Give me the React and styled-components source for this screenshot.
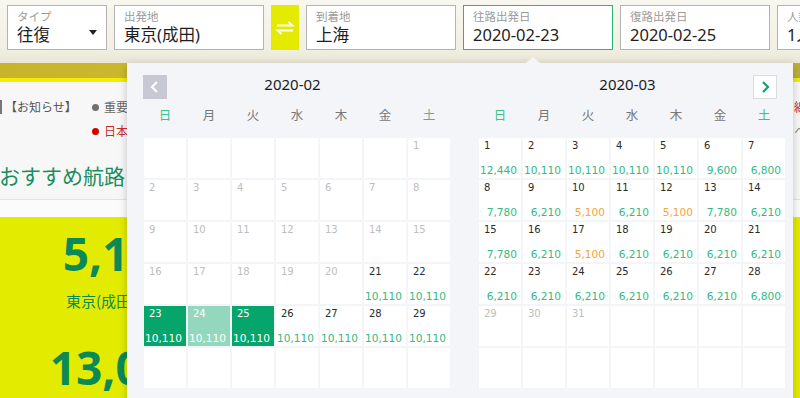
import React from "react";
import styled, { createGlobalStyle } from "styled-components";

const GlobalStyle = createGlobalStyle`
  html, body { margin: 0; padding: 0; }
  body {
    width: 800px;
    height: 398px;
    overflow: hidden;
    background: #ffffff;
    font-family: "Noto Sans", "Noto Sans CJK JP", sans-serif;
  }
`;

const Page = styled.div`
  position: relative;
  width: 800px;
  height: 398px;
  overflow: hidden;
`;

/* ---------- search bar ---------- */

const TopBar = styled.div`
  height: 63px;
  box-sizing: border-box;
  padding: 5px 0 0 7px;
  display: flex;
  gap: 7px;
  align-items: flex-start;
  background: linear-gradient(#f8f7ef, #f2f0e3 75%, #e9e6d5);
  overflow: hidden;
`;

const Field = styled.div`
  position: relative;
  flex: 0 0 auto;
  width: ${p => p.$w || 150}px;
  height: 45px;
  box-sizing: border-box;
  padding: 2px 9px 0;
  background: #ffffff;
  border: 1px solid ${p => (p.$active ? "#2db673" : "#b3b3b3")};
`;

const Label = styled.div`
  font-family: "Noto Sans CJK JP", sans-serif;
  font-size: 11.5px;
  line-height: 16px;
  color: #9a9a9a;
`;

const Value = styled.div`
  font-size: 16.5px;
  line-height: 22px;
  color: #1e1e1e;
  white-space: nowrap;
`;

const Caret = styled.span`
  position: absolute;
  right: 9px;
  top: 24px;
  border-left: 4px solid transparent;
  border-right: 4px solid transparent;
  border-top: 5px solid #222;
`;

const SwapButton = styled.div`
  flex: 0 0 auto;
  width: 28px;
  height: 45px;
  display: flex;
  align-items: center;
  justify-content: center;
  background: #e4ea00;
`;

/* ---------- page behind the popup ---------- */

const Banner = styled.div`
  height: 15px;
  background: linear-gradient(90deg, #c8b42b, #d3c138 60%, #e0d24e 78%, #cdbd33 90%, #b9ae3c);
  border-bottom: 4px solid #f1ee00;
`;

const Notices = styled.div`
  height: 118px;
  box-sizing: border-box;
  padding-top: 13px;
  background: #f7f7f7;
  border-bottom: 1px solid #e3e3e3;
`;

const NoticeGrid = styled.div`
  display: grid;
  grid-template-columns: 92px 702px 40px;
  font-family: "Noto Sans CJK JP", sans-serif;
  font-size: 12px;
  line-height: 24px;
  color: #666;
`;

const NoticeTag = styled.div`
  padding-left: 3px;
  color: #555;
  border-left: 2px solid #777;
  height: 14px;
  line-height: 14px;
  margin-top: 5px;
`;

const NoticeItem = styled.div`
  display: flex;
  align-items: center;
  gap: 5px;
  white-space: nowrap;
  color: ${p => (p.$red ? "#c8282d" : "#666")};

  &::before {
    content: "";
    width: 7px;
    height: 7px;
    border-radius: 50%;
    background: ${p => (p.$red ? "#d40000" : "#707070")};
  }
`;

const SideNote = styled.div`
  white-space: nowrap;
  color: ${p => (p.$red ? "#c8282d" : "#888")};
`;

const Heading = styled.h2`
  margin: 17px 0 0 -1px;
  font-family: "Noto Sans CJK JP", sans-serif;
  font-size: 21px;
  line-height: 30px;
  font-weight: 400;
  color: #178f5d;
`;

const Gap = styled.div`
  height: 17px;
  background: #fbfbfb;
`;

const Promo = styled.div`
  height: 200px;
  background: #e3eb00;
`;

const PromoColumn = styled.div`
  width: 244px;
  padding-top: 10px;
  text-align: center;
  color: #0b8a57;
`;

const Fare = styled.div`
  font-size: 46px;
  line-height: 52px;
  font-weight: 700;
  margin-top: ${p => p.$mt || 0}px;
`;

const Route = styled.div`
  margin-top: 12px;
  font-family: "Noto Sans CJK JP", sans-serif;
  font-size: 15px;
  line-height: 20px;
`;

/* ---------- calendar popup ---------- */

const Popup = styled.div`
  position: absolute;
  left: 127px;
  top: 63px;
  width: 666px;
  height: 345px;
  box-sizing: border-box;
  padding: 12px 8px 0 17px;
  display: flex;
  gap: 29px;
  background: #f4f5f9;
  box-shadow: 0 2px 8px rgba(0, 0, 0, 0.22);

  &::before {
    content: "";
    position: absolute;
    left: 399px;
    top: -6px;
    border-left: 7px solid transparent;
    border-right: 7px solid transparent;
    border-bottom: 6px solid #f4f5f9;
  }
`;

const Month = styled.div`
  width: 306px;
`;

const MonthHead = styled.div`
  display: grid;
  grid-template-columns: 24px 1fr 24px;
  height: 24px;
  margin-left: -1px;
  padding-right: 8px;
`;

const MonthTitle = styled.div`
  grid-column: 2;
  text-align: center;
  font-size: 15px;
  line-height: 18px;
  color: #1b1b1b;
`;

const NavButton = styled.div`
  grid-column: ${p => (p.$next ? 3 : 1)};
  grid-row: 1;
  width: 24px;
  height: 24px;
  box-sizing: border-box;
  display: flex;
  align-items: center;
  justify-content: center;
  background: ${p => (p.$next ? "#ffffff" : "#c6c9d4")};
  border: ${p => (p.$next ? "1px solid #dcdcdc" : "none")};
`;

const WeekRow = styled.div`
  display: grid;
  grid-template-columns: repeat(7, 42px);
  column-gap: 2px;
  margin: 6px 0 13px;
  font-family: "Noto Sans CJK JP", sans-serif;
  font-size: 12.5px;
  line-height: 20px;
  text-align: center;
`;

const WeekDay = styled.div`
  color: ${p => (p.$weekend ? "#3dbf8d" : "#777777")};
`;

const DayGrid = styled.div`
  display: grid;
  grid-template-columns: repeat(7, 42px);
  grid-auto-rows: 40px;
  gap: 2px;
`;

const cellBg = {
  start: "#05a56b",
  range: "#93d7be",
};

const Cell = styled.div`
  display: flex;
  flex-direction: column;
  justify-content: space-between;
  box-sizing: border-box;
  padding: 1px 4px 1px 5px;
  background: ${p => cellBg[p.$kind] || "#ffffff"};
  font-family: "DejaVu Sans", "Liberation Sans", sans-serif;
  color: ${p =>
    p.$kind === "past" ? "#bdbdbd" : p.$kind === "start" || p.$kind === "range" ? "#ffffff" : "#2b2b2b"};
`;

const DayNum = styled.div`
  font-size: 10px;
  line-height: 13px;
`;

const Price = styled.div`
  display: flex;
  justify-content: flex-end;
  font-size: 10.6px;
  line-height: 13px;
  white-space: nowrap;
  color: ${p => (p.$white ? "#ffffff" : p.$cheap ? "#f5a53a" : "#36b982")};
`;

const WEEK = ["日", "月", "火", "水", "木", "金", "土"];

const febPrices = {};
for (let d = 21; d <= 29; d++) febPrices[d] = "10,110";

const marPrices = {
  1: "12,440", 2: "10,110", 3: "10,110", 4: "10,110", 5: "10,110", 6: "9,600", 7: "6,800",
  8: "7,780", 9: "6,210", 10: "5,100", 11: "6,210", 12: "5,100", 13: "7,780", 14: "6,210",
  15: "7,780", 16: "6,210", 17: "5,100", 18: "6,210", 19: "6,210", 20: "6,210", 21: "6,210",
  22: "6,210", 23: "6,210", 24: "6,210", 25: "6,210", 26: "6,210", 27: "6,210", 28: "6,800",
};

const months = [
  { title: "2020-02", offset: 6, days: 29, prices: febPrices, selected: { 23: "start", 24: "range", 25: "start" } },
  { title: "2020-03", offset: 0, days: 31, prices: marPrices, selected: {} },
];

const Chevron = ({ dir, color }) => (
  <svg width="12" height="14" viewBox="0 0 12 14">
    <polyline
      points={dir === "left" ? "8,2 3,7 8,12" : "4,2 9,7 4,12"}
      fill="none"
      stroke={color}
      strokeWidth="2.2"
    />
  </svg>
);

const MonthView = ({ month, index }) => {
  const cells = [];
  for (let i = 0; i < 42; i++) {
    const day = i - month.offset + 1;
    if (day < 1 || day > month.days) {
      cells.push(<Cell key={i} $kind="empty" />);
      continue;
    }
    const price = month.prices[day];
    const kind = month.selected[day] || (price ? "normal" : "past");
    const white = kind === "start" || kind === "range";
    cells.push(
      <Cell key={i} $kind={kind}>
        <DayNum>{day}</DayNum>
        {price && (
          <Price $white={white} $cheap={price === "5,100"}>
            <span>{price}</span>
          </Price>
        )}
      </Cell>
    );
  }

  return (
    <Month>
      <MonthHead>
        <MonthTitle>{month.title}</MonthTitle>
        {index === 0 ? (
          <NavButton>
            <Chevron dir="left" color="#ffffff" />
          </NavButton>
        ) : (
          <NavButton $next>
            <Chevron dir="right" color="#12a066" />
          </NavButton>
        )}
      </MonthHead>
      <WeekRow>
        {WEEK.map((w, i) => (
          <WeekDay key={w} $weekend={i === 0 || i === 6}>
            {w}
          </WeekDay>
        ))}
      </WeekRow>
      <DayGrid>{cells}</DayGrid>
    </Month>
  );
};

export default function App() {
  return (
    <>
      <GlobalStyle />
      <Page>
        <TopBar>
          <Field $w={100}>
            <Label>タイプ</Label>
            <Value>往復</Value>
            <Caret />
          </Field>
          <Field>
            <Label>出発地</Label>
            <Value>東京(成田)</Value>
          </Field>
          <SwapButton>
            <svg width="20" height="14" viewBox="0 0 20 14">
              <path d="M2 4.5 H17.5 L13.5 1" fill="none" stroke="#fff" strokeWidth="1.8" />
              <path d="M18 9.5 H2.5 L6.5 13" fill="none" stroke="#fff" strokeWidth="1.8" />
            </svg>
          </SwapButton>
          <Field>
            <Label>到着地</Label>
            <Value>上海</Value>
          </Field>
          <Field $active>
            <Label>往路出発日</Label>
            <Value>2020-02-23</Value>
          </Field>
          <Field>
            <Label>復路出発日</Label>
            <Value>2020-02-25</Value>
          </Field>
          <Field>
            <Label>人数</Label>
            <Value>1人</Value>
          </Field>
        </TopBar>

        <Banner />
        <Notices>
          <NoticeGrid>
            <NoticeTag>【お知らせ】</NoticeTag>
            <div>
              <NoticeItem>重要なお知らせ</NoticeItem>
              <NoticeItem $red>日本入国に関するご案内</NoticeItem>
            </div>
            <div>
              <SideNote $red>線</SideNote>
              <SideNote>ヘ</SideNote>
            </div>
          </NoticeGrid>
          <Heading>おすすめ航路</Heading>
        </Notices>
        <Gap />
        <Promo>
          <PromoColumn>
            <Fare>5,100</Fare>
            <Route>東京(成田) - 上海</Route>
            <Fare $mt={30}>13,000</Fare>
          </PromoColumn>
        </Promo>

        <Popup>
          {months.map((m, i) => (
            <MonthView key={m.title} month={m} index={i} />
          ))}
        </Popup>
      </Page>
    </>
  );
}
